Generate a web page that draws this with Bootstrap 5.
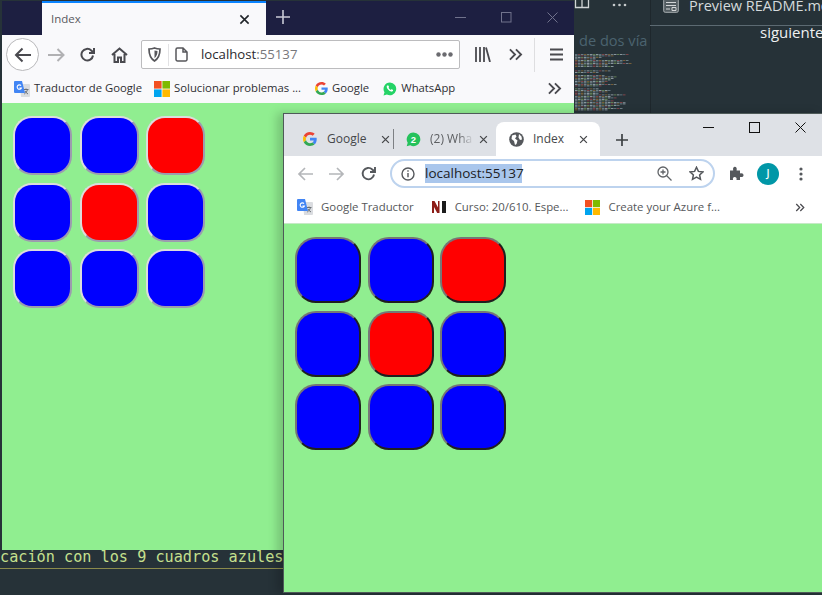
<!DOCTYPE html>
<html lang="es">
<head>
    <meta charset="UTF-8">
    <meta name="viewport" content="width=device-width, initial-scale=1.0">
    <title>Index</title>
    <link href="https://cdn.jsdelivr.net/npm/bootstrap@5.3.1/dist/css/bootstrap.min.css" rel="stylesheet">
    <style>
        html, body { margin: 0; height: 100%; overflow: hidden; }
        body { background: #263238; font-family: "Open Sans", "Noto Sans", sans-serif; }
        svg { display: block; flex: none; }
        .desk { position: relative; width: 822px; height: 595px; overflow: hidden; background: #263238; }

        /* editor behind the windows */
        .ed-divider { position: absolute; left: 650px; top: 0; width: 1px; height: 113px; background: #1e272c; }
        .ed-rule { position: absolute; left: 650px; top: 25px; width: 172px; height: 1px; background: #5c6a72; }
        .ed-faded { position: absolute; left: 579px; top: 30px; font-size: 14.6px; color: #4b636f; line-height: 20px; white-space: nowrap; }
        .ed-preview { position: absolute; left: 689px; top: -4px; font-size: 14.5px; color: #d5dadc; line-height: 20px; white-space: nowrap; }
        .ed-next { position: absolute; left: 760px; top: 22px; font-size: 15px; color: #eef0f1; line-height: 20px; white-space: nowrap; }
        .ed-dots { position: absolute; left: 612px; top: 3px; }
        .ed-split { position: absolute; left: 574px; top: -4px; }
        .ed-page { position: absolute; left: 663px; top: -2px; }
        .ed-map { position: absolute; left: 575px; top: 53px; }
        .term-line { position: absolute; left: 0; top: 548px; width: 290px; font-family: "DejaVu Sans Mono", "Liberation Mono", monospace; font-size: 15.2px; line-height: 18px; color: #c5e08e; white-space: nowrap; overflow: hidden; }
        .term-rule { position: absolute; left: 0; top: 568px; width: 290px; height: 1px; background: #8b8b4c; }

        /* firefox */
        .ff-win { position: absolute; left: 2px; top: 1px; width: 572px; height: 549px; display: flex; flex-direction: column; background: #90ee90; }
        .ff-title { height: 34px; background: #1d1f41; display: flex; flex: none; }
        .ff-tab { margin-left: 40px; width: 224px; background: #f9f9fb; border-top: 2px solid #0a84ff; display: flex; align-items: center; padding: 0 16px 0 9px; font-size: 11.5px; color: #5a5a60; justify-content: space-between; }
        .ff-plus { margin-left: 10px; margin-top: 9px; }
        .ff-ctrl { margin-left: auto; display: flex; align-items: center; gap: 35px; padding: 0 16px 2px 0; }
        .ff-bar { height: 37px; padding-top: 2px; background: #f9f9fb; display: flex; align-items: center; flex: none; color: #4a4a4f; }
        .ff-circle { margin-left: 4px; width: 33px; height: 33px; border: 1px solid #b9b9bb; border-radius: 50%; display: flex; align-items: center; justify-content: center; background: #fff; }
        .ff-fwd { margin-left: 9px; }
        .ff-reload { margin-left: 15px; }
        .ff-home { margin-left: 16px; }
        .ff-url { margin-left: 13px; width: 319px; height: 29px; background: #fff; border: 1px solid #bcbcbe; border-radius: 2px; display: flex; align-items: center; padding-left: 6px; }
        .ff-sep { width: 1px; height: 22px; background: #e2e2e4; margin: 0 6px 0 7px; }
        .ff-addr { margin-left: 13px; font-size: 13.2px; color: #2a2a2e; }
        .ff-addr span { color: #77777b; }
        .ff-more { margin-left: auto; margin-right: 6px; }
        .ff-lib { margin-left: 15px; }
        .ff-chev { margin-left: 17px; }
        .ff-tsep { width: 1px; height: 34px; background: #dedee0; margin-left: 11px; }
        .ff-burger { margin-left: 15px; }
        .ff-marks { height: 31px; padding-top: 2px; background: #f9f9fb; display: flex; align-items: center; flex: none; font-size: 11.3px; color: #2f2f33; padding-left: 12px; white-space: nowrap; }
        .ff-marks span { margin-left: 4px; }
        .ff-m2 { margin-left: 12px; }
        .ff-m3 { margin-left: 14px; }
        .ff-m4 { margin-left: 14px; }
        .ff-mend { margin-left: auto; margin-right: 12px; }
        .ff-page { flex: 1; padding: 13px 0 0 11px; }

        /* chrome */
        .ch-win { position: absolute; left: 283px; top: 113px; width: 539px; height: 480px; border: 1px solid #4e5a58; border-right: 0; display: flex; flex-direction: column; background: #90ee90; box-shadow: -6px 0 9px rgba(0,0,0,.18); }
        .ch-strip { height: 42px; background: #dee1e6; display: flex; align-items: flex-end; flex: none; position: relative; font-size: 12px; color: #45474a; }
        .ch-tab { height: 34px; display: flex; align-items: center; white-space: nowrap; }
        .ch-t1 { width: 110px; padding-left: 19px; border-right: 1px solid #7d8084; height: 20px; margin-bottom: 7px; }
        .ch-t2 { width: 102px; padding-left: 12px; }
        .ch-t3 { width: 104px; padding-left: 13px; background: #fff; border-radius: 8px 8px 0 0; }
        .ch-name { margin-left: 9px; }
        .ch-t1 .ch-name { margin-left: 10px; }
        .ch-fade { color: #5c5e61; width: 46px; -webkit-mask-image: linear-gradient(90deg, #000 62%, transparent 96%); mask-image: linear-gradient(90deg, #000 62%, transparent 96%); margin-left: 9px; }
        .ch-x1 { margin-left: 15px; }
        .ch-x2 { margin-left: 3px; }
        .ch-x3 { margin-left: 15px; }
        .ch-plus { margin-left: 16px; margin-bottom: 10px; }
        .ch-ctrl { margin-left: auto; align-self: flex-start; display: flex; align-items: center; gap: 35px; padding: 8px 16px 0 0; }
        .ch-bar { height: 35px; background: #fff; display: flex; align-items: center; flex: none; padding-left: 13px; }
        .ch-fwd { margin-left: 16px; }
        .ch-reload { margin-left: 16px; }
        .ch-omni { margin-left: 14px; width: 325px; height: 29px; border: 2px solid #bdd3ee; border-radius: 15px; display: flex; align-items: center; padding-left: 9px; }
        .ch-sel { margin-left: 10px; background: #a9c6ec; color: #202124; font-size: 13.5px; line-height: 19px; padding: 0; width: 97px; white-space: nowrap; }
        .ch-zoom { margin-left: auto; }
        .ch-star { margin-left: 17px; margin-right: 9px; }
        .ch-puzzle { margin-left: 14px; }
        .ch-avatar { margin-left: 13px; width: 22px; height: 22px; border-radius: 50%; background: #0097a7; color: #fff; font-size: 10px; font-weight: 600; display: flex; align-items: center; justify-content: center; }
        .ch-menu { margin-left: 20px; }
        .ch-marks { height: 33px; background: #fff; border-bottom: 1px solid #c6e9c6; display: flex; align-items: center; flex: none; font-size: 11.4px; color: #55575a; padding-left: 13px; white-space: nowrap; }
        .ch-marks span { margin-left: 8px; }
        .ch-m2 { margin-left: 18px; }
        .ch-m3 { margin-left: 17px; }
        .ch-mend { margin-left: auto; margin-right: 17px; }
        .ch-page { flex: 1; padding: 13px 0 0 11px; }

        /* the 3x3 board */
        .board { display: grid; }
        .ff-page .board { grid-template-columns: repeat(3, 59px); grid-auto-rows: 59px; gap: 7.5px; }
        .ch-page .board { grid-template-columns: repeat(3, 66px); grid-auto-rows: 66px; gap: 7.5px 6.5px; }
        .sq { padding: 0; }
        .ff-page .sq { border-radius: 19px; border: 2px solid; border-color: #dcdcdc #9c9cae #9c9cae #dcdcdc; }
        .ch-page .sq { border-radius: 21px; border: 2px solid; border-color: #767676 #1f1f1f #1f1f1f #767676; }
        .sq-blue { background: #0000ff; }
        .sq-red { background: #ff0000; }
    </style>
</head>
<body>
<svg width="0" height="0" class="position-absolute">
    <symbol id="g-logo" viewBox="0 0 48 48">
        <path fill="#EA4335" d="M24 9.5c3.54 0 6.71 1.22 9.21 3.6l6.85-6.85C35.9 2.38 30.47 0 24 0 14.62 0 6.51 5.38 2.56 13.22l7.98 6.19C12.43 13.72 17.74 9.5 24 9.5z"/>
        <path fill="#4285F4" d="M46.98 24.55c0-1.57-.15-3.09-.38-4.55H24v9.02h12.94c-.58 2.96-2.26 5.48-4.78 7.18l7.73 6c4.51-4.18 7.09-10.36 7.09-17.65z"/>
        <path fill="#FBBC05" d="M10.53 28.59c-.48-1.45-.76-2.99-.76-4.59s.27-3.14.76-4.59l-7.98-6.19C.92 16.46 0 20.12 0 24c0 3.88.92 7.54 2.56 10.78l7.97-6.19z"/>
        <path fill="#34A853" d="M24 48c6.48 0 11.93-2.13 15.89-5.81l-7.73-6c-2.15 1.45-4.92 2.3-8.16 2.3-6.26 0-11.57-4.22-13.47-9.91l-7.98 6.19C6.51 42.62 14.62 48 24 48z"/>
    </symbol>
    <symbol id="ms-logo" viewBox="0 0 16 16">
        <rect width="7.6" height="7.6" fill="#f25022"/>
        <rect x="8.4" width="7.6" height="7.6" fill="#7fba00"/>
        <rect y="8.4" width="7.6" height="7.6" fill="#00a4ef"/>
        <rect x="8.4" y="8.4" width="7.6" height="7.6" fill="#ffb900"/>
    </symbol>
    <symbol id="gt-logo" viewBox="0 0 16 16">
        <path fill="#dadce0" d="M6 3h9a1 1 0 0 1 1 1v11a1 1 0 0 1-1 1H7z"/>
        <path fill="#4285f4" d="M1 0h7l3 12H1a1 1 0 0 1-1-1V1a1 1 0 0 1 1-1z"/>
        <path fill="none" stroke="#fff" stroke-width="1.1" d="M7 4.6A2.2 2.2 0 1 0 7.4 7H5.4"/>
        <path fill="none" stroke="#6b7075" stroke-width="1" d="M10 8.5h4.5M12 7.5v1M13.5 8.5c-.5 2-1.6 3.6-3.2 4.5M11 10c.6 1.2 1.7 2.3 3 3"/>
    </symbol>
    <symbol id="x-mark" viewBox="0 0 12 12">
        <path d="M1.5 1.5l9 9M10.5 1.5l-9 9" fill="none" stroke="currentColor" stroke-width="1.7"/>
    </symbol>
    <symbol id="chev-d" viewBox="0 0 16 14">
        <path d="M2 1.5L7.5 7 2 12.5M8.5 1.500L14 7l-5.500 5.500" fill="none" stroke="#4a4a4f" stroke-width="2"/>
    </symbol>
</svg>

<div class="desk">
    <!-- editor behind the browsers -->
    <svg class="ed-map" id="minimap" width="75" height="59" viewBox="0 0 75 59"></svg>
    <div class="ed-divider"></div>
    <div class="ed-rule"></div>
    <svg class="ed-split" width="16" height="14" viewBox="0 0 16 14"><path d="M1.500 0v11.500h13V0M8 0v11.500" fill="none" stroke="#d0d4d6" stroke-width="1.300"/></svg>
    <svg class="ed-dots" width="15" height="4" viewBox="0 0 15 4"><circle cx="2" cy="2" r="1.300" fill="#c5cacc"/><circle cx="7.500" cy="2" r="1.300" fill="#c5cacc"/><circle cx="13" cy="2" r="1.300" fill="#c5cacc"/></svg>
    <svg class="ed-page" width="16" height="15" viewBox="0 0 16 15"><rect x=".7" y=".7" width="14.600" height="13.600" rx="1.500" fill="#525c61" stroke="#a9afb2"/><path d="M3 4.500h10M3 7.500h10M3 11h4M9 9.500h4v3H9z" fill="none" stroke="#d3d6d8"/></svg>
    <div class="ed-preview">Preview README.md</div>
    <div class="ed-faded">de dos vía</div>
    <div class="ed-next">siguiente</div>
    <div class="term-line">cación con los 9 cuadros azules</div>
    <div class="term-rule"></div>

    <!-- firefox -->
    <div class="ff-win">
        <div class="ff-title">
            <div class="ff-tab">
                <span>Index</span>
                <svg width="11" height="11" class="text-dark"><use href="#x-mark"/></svg>
            </div>
            <svg class="ff-plus" width="14" height="14" viewBox="0 0 14 14"><path d="M7 0v14M0 7h14" stroke="#c9cad6" stroke-width="1.600"/></svg>
            <div class="ff-ctrl">
                <svg width="11" height="11" viewBox="0 0 11 11"><path d="M0 5.500h11" stroke="#70728c"/></svg>
                <svg width="11" height="11" viewBox="0 0 11 11"><rect x=".5" y=".5" width="9.500" height="9.500" fill="none" stroke="#70728c"/></svg>
                <svg width="11" height="11" viewBox="0 0 11 11"><path d="M.5.5l10 10M10.500.5l-10 10" stroke="#70728c"/></svg>
            </div>
        </div>
        <div class="ff-bar">
            <div class="ff-circle">
                <svg width="18" height="16" viewBox="0 0 18 16"><path d="M17 8H2M8.500 1.500L2 8l6.500 6.500" fill="none" stroke="#4a4a4f" stroke-width="2"/></svg>
            </div>
            <svg class="ff-fwd" width="17" height="14" viewBox="0 0 17 14"><path d="M0 7h15M9.500 1L15.500 7l-6 6" fill="none" stroke="#b1b1b3" stroke-width="2"/></svg>
            <svg class="ff-reload" width="15" height="15" viewBox="0 0 15 15"><path d="M13 8.500A5.800 5.800 0 1 1 11.300 3.500L13.500 5.500M14 1v5H9" fill="none" stroke="#4a4a4f" stroke-width="2"/></svg>
            <svg class="ff-home" width="17" height="16" viewBox="0 0 17 16"><path d="M1 8l7.500-6.500L16 8M3.500 7v8h3.500v-4.500h3V15h3.500V7" fill="none" stroke="#4a4a4f" stroke-width="2"/></svg>
            <div class="ff-url">
                <svg width="13" height="15" viewBox="0 0 13 15"><path d="M6.500 1c2 .8 3.800 1 5.500 1 0 5.500-1.500 9.500-5.500 12C2.500 11.500 1 7.500 1 2c1.700 0 3.500-.2 5.500-1z" fill="none" stroke="#57575b" stroke-width="1.700"/><path d="M6.500 3.500c1 .3 2 .5 3 .5 0 3-.8 5.500-3 7.200z" fill="#57575b"/></svg>
                <div class="ff-sep"></div>
                <svg width="13" height="15" viewBox="0 0 13 15"><path d="M2.500 1H8l4 4v7.500a1.500 1.500 0 0 1-1.500 1.500h-8A1.500 1.500 0 0 1 1 12.500v-10A1.500 1.500 0 0 1 2.500 1zM8 1v4h4" fill="none" stroke="#57575b" stroke-width="1.500"/></svg>
                <div class="ff-addr">localhost<span>:55137</span></div>
                <svg class="ff-more" width="17" height="5" viewBox="0 0 17 5"><circle cx="2.500" cy="2.500" r="2.200" fill="#6b6b70"/><circle cx="8.500" cy="2.500" r="2.200" fill="#6b6b70"/><circle cx="14.500" cy="2.500" r="2.200" fill="#6b6b70"/></svg>
            </div>
            <svg class="ff-lib" width="16" height="15" viewBox="0 0 16 15"><path d="M1 0v15M5 0v15M9 0v15M11 .5L15 15" fill="none" stroke="#4a4a4f" stroke-width="1.800"/></svg>
            <svg class="ff-chev" width="15" height="13"><use href="#chev-d"/></svg>
            <div class="ff-tsep"></div>
            <svg class="ff-burger" width="13" height="13" viewBox="0 0 13 13"><path d="M0 1.500h13M0 6.500h13M0 11.500h13" stroke="#4a4a4f" stroke-width="2"/></svg>
        </div>
        <div class="ff-marks">
            <svg width="16" height="16"><use href="#gt-logo"/></svg><span>Traductor de Google</span>
            <svg class="ff-m2" width="16" height="16"><use href="#ms-logo"/></svg><span>Solucionar problemas ...</span>
            <svg class="ff-m3" width="13" height="13"><use href="#g-logo"/></svg><span>Google</span>
            <svg class="ff-m4" width="14" height="14" viewBox="0 0 14 14"><path d="M7 .5a6.400 6.400 0 0 0-5.500 9.700L.5 13.500l3.400-.9A6.400 6.400 0 1 0 7 .5z" fill="#25d366"/><path d="M4.800 3.700c.5-.3.800 0 1 .6.200.6.300.8 0 1.100l-.3.400c.4.900 1.200 1.700 2.200 2.200l.5-.5c.2-.2.500-.2 1.100.1s.9.500.8.900c-.2.800-1 1.300-1.900 1.100-2.100-.4-4.200-2.500-4.500-4.500-.1-.7.200-1.500.6-1.900z" fill="#fff"/></svg><span>WhatsApp</span>
            <svg class="ff-mend" width="15" height="13"><use href="#chev-d"/></svg>
        </div>
        <div class="ff-page">
            <div class="board">
                <button class="sq sq-blue"></button><button class="sq sq-blue"></button><button class="sq sq-red"></button>
                <button class="sq sq-blue"></button><button class="sq sq-red"></button><button class="sq sq-blue"></button>
                <button class="sq sq-blue"></button><button class="sq sq-blue"></button><button class="sq sq-blue"></button>
            </div>
        </div>
    </div>

    <!-- chrome -->
    <div class="ch-win">
        <div class="ch-strip">
            <div class="ch-tab ch-t1">
                <svg width="14" height="14"><use href="#g-logo"/></svg>
                <span class="ch-name">Google</span>
                <svg class="ch-x1" width="9" height="9"><use href="#x-mark"/></svg>
            </div>
            <div class="ch-tab ch-t2">
                <svg width="15" height="15" viewBox="0 0 15 15"><path d="M7.500.5a6.800 6.800 0 0 0-5.800 10.300L.7 14.300l3.600-1A6.800 6.800 0 1 0 7.500.5z" fill="#25c25c"/><text x="7.500" y="11" text-anchor="middle" font-size="9.500" font-weight="700" fill="#fff" font-family="Liberation Sans, sans-serif">2</text></svg>
                <div class="ch-fade">(2) Wha</div>
                <svg class="ch-x2" width="9" height="9"><use href="#x-mark"/></svg>
            </div>
            <div class="ch-tab ch-t3">
                <svg width="15" height="15" viewBox="0 0 15 15"><circle cx="7.500" cy="7.500" r="7.300" fill="#55585c"/><path d="M3 3.500l3.500-1 1 2-1.500 2 2.500 2-1 3.500-1.500 1-1-4-2.500-2zM10 2l2.500 2.500.5 3-2 .5-1.500-2.500z" fill="#fff"/></svg>
                <span class="ch-name">Index</span>
                <svg class="ch-x3" width="9" height="9"><use href="#x-mark"/></svg>
            </div>
            <svg class="ch-plus" width="12" height="12" viewBox="0 0 12 12"><path d="M6 0v12M0 6h12" stroke="#3c4043" stroke-width="1.700"/></svg>
            <div class="ch-ctrl">
                <svg width="11" height="11" viewBox="0 0 11 11"><path d="M0 5.500h11" stroke="#111"/></svg>
                <svg width="11" height="11" viewBox="0 0 11 11"><rect x=".5" y=".5" width="10" height="10" fill="none" stroke="#111"/></svg>
                <svg width="11" height="11" viewBox="0 0 11 11"><path d="M.5.5l10 10M10.500.5l-10 10" stroke="#111"/></svg>
            </div>
        </div>
        <div class="ch-bar">
            <svg width="16" height="14" viewBox="0 0 16 14"><path d="M16 7H2M8 1L2 7l6 6" fill="none" stroke="#b4b6b9" stroke-width="1.700"/></svg>
            <svg class="ch-fwd" width="16" height="14" viewBox="0 0 16 14"><path d="M0 7h14M8 1l6 6-6 6" fill="none" stroke="#b4b6b9" stroke-width="1.700"/></svg>
            <svg class="ch-reload" width="15" height="15" viewBox="0 0 15 15"><path d="M13 8.500A5.700 5.700 0 1 1 11.300 3.500L13.500 5.500M14 1v5H9" fill="none" stroke="#55585c" stroke-width="1.900"/></svg>
            <div class="ch-omni">
                <svg width="14" height="14" viewBox="0 0 14 14"><circle cx="7" cy="7" r="6" fill="none" stroke="#55585c" stroke-width="1.400"/><path d="M7 6v4.300M7 3.300v1.500" stroke="#55585c" stroke-width="1.400"/></svg>
                <div class="ch-sel">localhost:55137</div>
                <svg class="ch-zoom" width="15" height="15" viewBox="0 0 15 15"><circle cx="6" cy="6" r="5" fill="none" stroke="#606367" stroke-width="1.300"/><path d="M9.500 9.500L14.500 14.500M3.500 6h5M6 3.500v5" stroke="#606367" stroke-width="1.300"/></svg>
                <svg class="ch-star" width="15" height="15" viewBox="0 0 15 15"><path d="M7.500 1.300l1.900 4.100 4.500.5-3.300 3 .9 4.500-4-2.300-4 2.300.9-4.500-3.300-3 4.500-.5z" fill="none" stroke="#55585c" stroke-width="1.500"/></svg>
            </div>
            <svg class="ch-puzzle" width="15" height="15" viewBox="0 0 15 15"><path d="M1 4.500h3.200c-.6-2.500.4-3.700 1.700-3.700s2.300 1.200 1.700 3.700h3.400v3c2.400-.6 3.500.4 3.500 1.700s-1.100 2.300-3.500 1.700V14H7.500c.5-2-.5-2.900-1.800-2.900S3.500 12 4 14H1z" fill="#55585c"/></svg>
            <div class="ch-avatar">J</div>
            <svg class="ch-menu" width="4" height="14" viewBox="0 0 4 14"><circle cx="2" cy="2" r="1.600" fill="#55585c"/><circle cx="2" cy="7" r="1.600" fill="#55585c"/><circle cx="2" cy="12" r="1.600" fill="#55585c"/></svg>
        </div>
        <div class="ch-marks">
            <svg width="16" height="16"><use href="#gt-logo"/></svg><span>Google Traductor</span>
            <svg class="ch-m2" width="15" height="12" viewBox="0 0 15 12"><path d="M0 0h2.500L6 6.500V0h1.500v12H5.200L2 6v6H0z" fill="#8c1d18"/><path d="M10 0h4v12h-4z" fill="#1c1c1c"/></svg><span>Curso: 20/610. Espe...</span>
            <svg class="ch-m3" width="15" height="15"><use href="#ms-logo"/></svg><span>Create your Azure f...</span>
            <svg class="ch-mend" width="10" height="9"><use href="#chev-d"/></svg>
        </div>
        <div class="ch-page">
            <div class="board">
                <button class="sq sq-blue"></button><button class="sq sq-blue"></button><button class="sq sq-red"></button>
                <button class="sq sq-blue"></button><button class="sq sq-red"></button><button class="sq sq-blue"></button>
                <button class="sq sq-blue"></button><button class="sq sq-blue"></button><button class="sq sq-blue"></button>
            </div>
        </div>
    </div>
</div>

<script src="https://cdn.jsdelivr.net/npm/bootstrap@5.3.1/dist/js/bootstrap.bundle.min.js"></script>
<script>
    // minimap of the editor, just thin coloured rows
    const colors = ['#7f9098', '#a3b0b6', '#6f838d', '#8a6a3a', '#70905a', '#94494d', '#7f9098', '#a3b0b6'];
    const minimap = document.getElementById('minimap');
    let rows = '';
    let seed = 7;
    for (let y = 1; y < 58; y += 1.5) {
        seed = (seed * 31 + 11) % 97;
        if (seed % 6 === 0) continue;
        const end = 18 + seed % 38;
        for (let x = 0; x < end; x += 3) {
            const c = colors[(seed + x) % colors.length];
            rows += `<rect x="${x}" y="${y}" width="2.5" height="0.8" fill="${c}"/>`;
        }
    }
    minimap.innerHTML = rows;
</script>
</body>
</html>
